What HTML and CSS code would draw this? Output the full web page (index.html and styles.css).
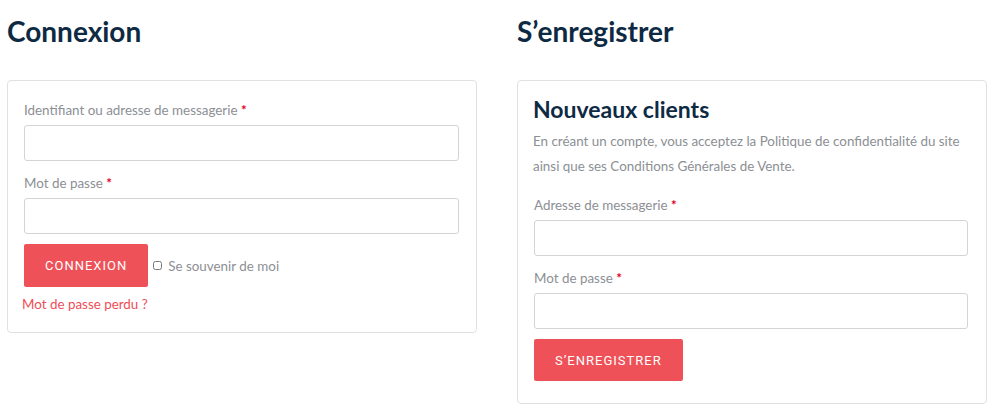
FILE: index.html
```html
<!DOCTYPE html>
<html lang="fr">
<head>
    <meta charset="UTF-8">
    <meta name="viewport" content="width=device-width, initial-scale=1.0">
    <title>Mon compte</title>
    <link rel="stylesheet" href="styles.css">
</head>
<body>
    <div class="account">
        <div class="col">
            <h2 class="col-title">Connexion</h2>
            <form class="box login-box">
                <div class="field">
                    <label>Identifiant ou adresse de messagerie <span class="req">*</span></label>
                    <input type="text">
                </div>
                <div class="field">
                    <label>Mot de passe <span class="req">*</span></label>
                    <input type="password">
                </div>
                <div class="login-row">
                    <button type="button" class="btn">Connexion</button>
                    <label class="remember"><input type="checkbox"> Se souvenir de moi</label>
                </div>
                <a class="lost" href="#">Mot de passe perdu ?</a>
            </form>
        </div>
        <div class="col">
            <h2 class="col-title">S’enregistrer</h2>
            <form class="box register-box">
                <h3 class="box-title">Nouveaux clients</h3>
                <p class="intro">En créant un compte, vous acceptez la Politique de confidentialité du site ainsi que ses Conditions Générales de Vente.</p>
                <div class="field">
                    <label>Adresse de messagerie <span class="req">*</span></label>
                    <input type="email">
                </div>
                <div class="field">
                    <label>Mot de passe <span class="req">*</span></label>
                    <input type="password">
                </div>
                <button type="button" class="btn">S’enregistrer</button>
            </form>
        </div>
    </div>
</body>
</html>
```

FILE: styles.css
```css
body {
    margin: 0;
    font-family: 'Lato', sans-serif;
    background-color: #fff;
    color: #8c8f94;
}
.account {
    display: grid;
    grid-template-columns: 470px 470px;
    column-gap: 40px;
    padding: 0 7px;
}
.col-title {
    margin: 14px 0 0;
    height: 66px;
    font-size: 28px;
    line-height: 34px;
    font-weight: 700;
    color: #0e2a43;
}
.box {
    display: block;
    border: 1px solid #e1e1e1;
    border-radius: 4px;
}
.login-box { padding: 19px 17px 18px 16px; }
.register-box { padding: 14px 18px 22px 15px; }
.field { margin-bottom: 12px; }
.register-box .field { margin-left: 1px; }
.field label {
    display: block;
    font-size: 13.4px;
    line-height: 20px;
    margin-bottom: 5px;
}
.req { color: #e2001a; font-weight: 700; }
.field input {
    display: block;
    width: 100%;
    height: 36px;
    box-sizing: border-box;
    border: 1px solid #d4d4d4;
    border-radius: 3px;
    background: #fff;
}
.login-row {
    display: flex;
    align-items: center;
    margin-top: -2px;
}
.btn {
    height: 43px;
    padding: 0 21px;
    border: none;
    border-radius: 2px;
    background-color: #ee5157;
    color: #fff;
    font-family: 'Roboto', sans-serif;
    font-size: 13px;
    letter-spacing: 1px;
    text-transform: uppercase;
    cursor: pointer;
}
.register-box .btn { height: 42px; margin-left: 1px; margin-top: -2px; }
.remember {
    display: flex;
    align-items: center;
    font-size: 13.4px;
    margin-left: 5px;
}
.remember input {
    width: 9px;
    height: 9px;
    margin: 0 6px 0 0;
}
.lost {
    display: block;
    margin: 7px 0 0 -2px;
    font-size: 13.4px;
    line-height: 20px;
    color: #ef4d56;
    text-decoration: none;
}
.box-title {
    margin: 0;
    font-size: 23px;
    line-height: 28px;
    font-weight: 700;
    color: #0e2a43;
}
.intro {
    margin: 6px 0 16px;
    font-size: 13.4px;
    line-height: 25px;
}
```
